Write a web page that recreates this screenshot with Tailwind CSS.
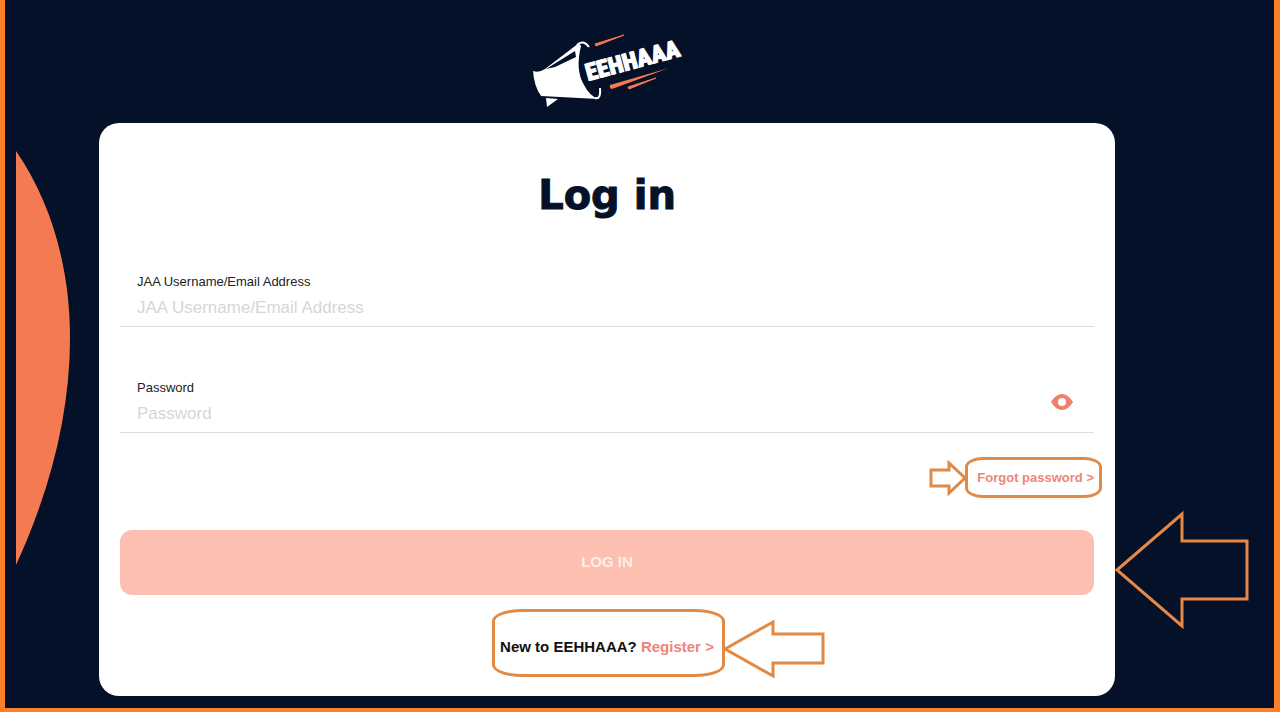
<!DOCTYPE html>
<html lang="en">
<head>
    <meta charset="UTF-8">
    <meta name="viewport" content="width=device-width, initial-scale=1.0">
    <title>Log in | EEHHAAA</title>
    <script src="https://cdn.jsdelivr.net/npm/@tailwindcss/browser@4"></script>
</head>
<body class="bg-white font-['Liberation_Sans',Arial,sans-serif]">

    <div class="relative bg-[#041129] border-[#fb8029] border-l-5 border-r-6 border-b-4 pl-[94px] pr-[159px] pt-6 pb-3">

        <!-- Side shape -->
        <svg class="absolute left-[11px] top-[151px]" width="55" height="415" viewBox="0 0 55 415" aria-hidden="true">
            <path d="M0 0C36 52 54 118 54 187C54 261 35 338 0 414Z" fill="#f47a52"/>
        </svg>

        <header class="flex justify-center">
            <svg width="152" height="84" viewBox="0 0 152 84" role="img" aria-label="EEHHAAA">
                <path d="M2 47Q8 49 14 45L48 19L50 22Q44 46 53 61Q58 71 67 75L10 72Q3 62 2 47Z" fill="#fff"/>
                <path d="M15 45L44 27L45 33L24 43Z" fill="#041129"/>
                <path d="M46 21Q52 15 58 23M69 64Q70 76 64 74" fill="none" stroke="#fff" stroke-width="2"/>
                <path d="M15 74L27 75L16 83Z" fill="#fff"/>
                <path d="M64 20L93 11L65 22Z" fill="#f47a52" stroke="#f47a52" stroke-width="1"/>
                <path d="M79 61L138 44L81 65Q78 64 79 61Z" fill="#f47a52"/>
                <path d="M97 63L125 54L98 65Z" fill="#f47a52" stroke="#f47a52" stroke-width="1"/>
                <text transform="translate(57 57) rotate(-15)" fill="#fff" stroke="#fff" stroke-width="1" font-family="'Roboto Condensed', Roboto, sans-serif" font-weight="900" font-size="24">EEHHAAA</text>
            </svg>
        </header>

        <main class="mt-[15px] bg-white rounded-[20px] px-[21px] pt-12 pb-[37px]">
            <h1 class="text-center text-[40px] leading-12 font-bold text-[#041129] font-['DejaVu_Sans',sans-serif] [-webkit-text-stroke:1px]">Log in</h1>

            <form onsubmit="return false">
                <div class="mt-[55px] border-b border-[#dcdcdc] px-[17px] pb-2">
                    <label for="username" class="block text-[13px] leading-4 text-[#222]">JAA Username/Email Address</label>
                    <input type="text" id="username" placeholder="JAA Username/Email Address" class="block w-full mt-2 h-5 text-[17px] text-[#222] placeholder:text-[#d6d6d6] outline-none">
                </div>

                <div class="mt-[53px] flex items-center border-b border-[#dcdcdc] px-[17px] pb-2">
                    <div class="grow">
                        <label for="password" class="block text-[13px] leading-4 text-[#222]">Password</label>
                        <input type="password" id="password" placeholder="Password" class="block w-full mt-2 h-5 text-[17px] text-[#222] placeholder:text-[#d6d6d6] outline-none">
                    </div>
                    <button type="button" aria-label="Show password" onclick="togglePassword()" class="mr-1 cursor-pointer">
                        <svg width="22" height="16" viewBox="0 0 22 16">
                            <path d="M0 8C3 3 7 0 11 0S19 3 22 8C19 13 15 16 11 16S3 13 0 8ZM11 4A4 4 0 1 0 11 12A4 4 0 1 0 11 4Z" fill="#ee8069" fill-rule="evenodd"/>
                        </svg>
                    </button>
                </div>

                <div class="mt-8 flex justify-end">
                    <div class="relative leading-6">
                        <a href="#" class="text-[13px] font-bold text-[#ee8578]">Forgot password &gt;</a>
                        <span class="absolute -left-3 -right-2 -top-2 -bottom-2 border-3 border-[#e18a45] rounded-[18px/10px] pointer-events-none"></span>
                        <svg class="absolute right-full top-1/2 -translate-y-1/2 mr-[10px] pointer-events-none" width="38" height="36" viewBox="0 0 38 36" fill="none" stroke="#e18a45" stroke-width="3">
                            <path d="M2 10H20V3L36 18L20 33V26H2Z"/>
                        </svg>
                    </div>
                </div>

                <div class="relative mt-10">
                    <button type="submit" class="block w-full h-[65px] rounded-xl bg-[#fdc0b0] text-[15px] font-bold text-[#fdeee6]">LOG IN</button>
                    <svg class="absolute left-full -top-5 ml-5 pointer-events-none" width="136" height="120" viewBox="0 0 136 120" fill="none" stroke="#e98745" stroke-width="3">
                        <path d="M3 60L68 4V31H133V89H68V116Z"/>
                    </svg>
                </div>
            </form>

            <div class="mt-10 flex justify-center">
                <p class="relative text-[15px] leading-6 font-bold text-[#111]">
                    New to EEHHAAA? <a href="#" class="text-[#ee8578]">Register &gt;</a>
                    <span class="absolute -left-2 -right-[11px] -top-[26px] -bottom-[18px] border-3 border-[#e18a45] rounded-[30px/12px] pointer-events-none"></span>
                    <svg class="absolute left-full -top-4 ml-2 pointer-events-none" width="104" height="60" viewBox="0 0 104 60" fill="none" stroke="#e18a45" stroke-width="3">
                        <path d="M3 30L51 3V15H101V44H51V57Z"/>
                    </svg>
                </p>
            </div>
        </main>
    </div>

    <script>
        function togglePassword() {
            const password = document.getElementById("password");
            password.type = password.type === "password" ? "text" : "password";
        }
    </script>

</body>
</html>
